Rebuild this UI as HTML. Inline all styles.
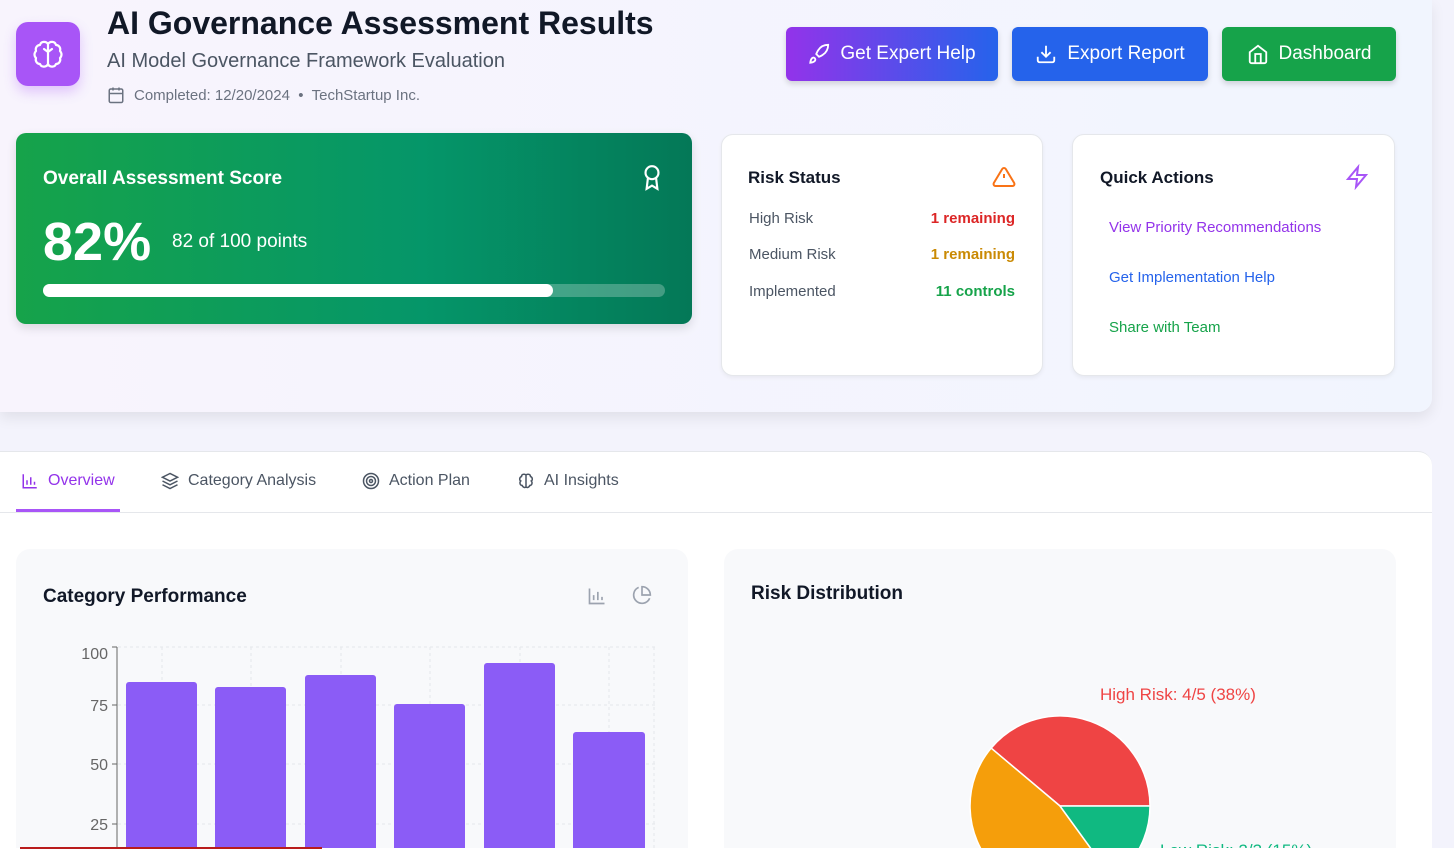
<!DOCTYPE html>
<html><head><meta charset="utf-8"><style>
*{box-sizing:border-box;margin:0;padding:0}
html,body{width:1454px;height:866px;overflow:hidden}
body{background:#f3f3fc;font-family:"Liberation Sans",sans-serif;position:relative;color:#111827}
.hdr{position:absolute;left:0;top:0;width:1432px;height:412px;background:linear-gradient(90deg,#f8f4fd,#f1f5fe);border-bottom-right-radius:14px;box-shadow:0 6px 14px rgba(0,0,0,.08)}
.logo{position:absolute;left:16px;top:22px;width:64px;height:64px;border-radius:12px;background:#a855f7;box-shadow:0 6px 12px rgba(168,85,247,.3)}
.abs{position:absolute}
.btn{position:absolute;top:27px;height:54px;border-radius:6px;color:#fff;font-size:19px;display:flex;align-items:center;justify-content:center;gap:10px;box-shadow:0 3px 6px rgba(0,0,0,.15)}
.card{position:absolute;background:#fff;border:1px solid #e5e7eb;border-radius:12px;box-shadow:0 2px 4px rgba(0,0,0,.05)}
.row{position:absolute;left:27px;right:27px;display:flex;justify-content:space-between;font-size:15px;color:#4b5563}
.tabs{position:absolute;left:0;top:451px;width:1432px;height:400px;background:#fff;border-top:1px solid #e5e7eb;border-top-right-radius:14px}
.tab{position:absolute;top:470px;font-size:16px;color:#4b5563;display:flex;align-items:center;gap:9px}
.panel{position:absolute;top:549px;height:300px;background:#f8f9fb;border-radius:14px 14px 0 0}
</style></head><body>
<div class="hdr"></div>
<div class="logo"><svg width="64" height="64" viewBox="0 0 64 64" fill="none" stroke="#fff" stroke-width="2.2" stroke-linecap="round" stroke-linejoin="round"><path d="M32 22v20M32 22c-2-3-7-3-8 1-3 0-5 3-4 6-2 2-2 5 0 7-1 3 1 6 4 6 1 3 6 4 8 0M32 22c2-3 7-3 8 1 3 0 5 3 4 6 2 2 2 5 0 7 1 3-1 6-4 6-1 3-6 4-8 0M32 30l-4-3M32 30l4-3"/></svg></div>
<div class="abs" style="left:107px;top:5px;font-size:32px;font-weight:bold;color:#111827">AI Governance Assessment Results</div>
<div class="abs" style="left:107px;top:50px;font-size:20px;color:#4b5563">AI Model Governance Framework Evaluation</div>
<div class="abs" style="left:107px;top:86px;font-size:15px;color:#6b7280;display:flex;align-items:center;gap:9px"><svg width="18" height="18" viewBox="0 0 24 24" fill="none" stroke="#6b7280" stroke-width="2"><rect x="3" y="4" width="18" height="18" rx="2"/><path d="M16 2v4M8 2v4M3 10h18"/></svg>Completed: 12/20/2024 &nbsp;•&nbsp; TechStartup Inc.</div>

<div class="btn" style="left:786px;width:212px;background:linear-gradient(90deg,#9333ea,#2563eb)"><svg width="22" height="22" viewBox="0 0 24 24" fill="none" stroke="#fff" stroke-width="2"><path d="M4.5 16.5c-1.5 1.3-2 5-2 5s3.7-.5 5-2c.7-.8.7-2.1-.1-2.9a2.2 2.2 0 0 0-2.9-.1zM12 15l-3-3a22 22 0 0 1 2-4A13 13 0 0 1 22 2c0 2.7-.8 7.5-6 11a22 22 0 0 1-4 2z"/></svg>Get Expert Help</div>
<div class="btn" style="left:1012px;width:196px;background:#2563eb"><svg width="22" height="22" viewBox="0 0 24 24" fill="none" stroke="#fff" stroke-width="2"><path d="M21 15v4a2 2 0 0 1-2 2H5a2 2 0 0 1-2-2v-4M7 10l5 5 5-5M12 15V3"/></svg>Export Report</div>
<div class="btn" style="left:1222px;width:174px;background:#16a34a"><svg width="22" height="22" viewBox="0 0 24 24" fill="none" stroke="#fff" stroke-width="2"><path d="M3 10l9-7 9 7v10a2 2 0 0 1-2 2H5a2 2 0 0 1-2-2z"/><path d="M9 22V12h6v10"/></svg>Dashboard</div>

<div class="abs" style="left:16px;top:133px;width:676px;height:191px;border-radius:10px;background:linear-gradient(90deg,#16a34a,#059669 60%,#047857);box-shadow:0 4px 10px rgba(0,0,0,.12)"></div>
<div class="abs" style="left:43px;top:168px;font-size:19px;font-weight:bold;color:#fff">Overall Assessment Score</div>
<svg class="abs" style="left:639px;top:163px" width="26" height="28" viewBox="0 0 24 26" fill="none" stroke="#fff" stroke-width="2"><circle cx="12" cy="9" r="6"/><path d="M8.2 14L7 24l5-3 5 3-1.2-10"/></svg>
<div class="abs" style="left:43px;top:212px;font-size:54px;font-weight:bold;color:#fff;line-height:60px">82%</div>
<div class="abs" style="left:172px;top:231px;font-size:19px;color:#fff">82 of 100 points</div>
<div class="abs" style="left:43px;top:284px;width:622px;height:13px;border-radius:7px;background:rgba(255,255,255,.25)"></div>
<div class="abs" style="left:43px;top:284px;width:510px;height:13px;border-radius:7px;background:#fff"></div>

<div class="card" style="left:721px;top:134px;width:322px;height:242px">
<div class="abs" style="left:26px;top:33px;font-size:17px;font-weight:bold">Risk Status</div>
<svg class="abs" style="left:270px;top:30px" width="24" height="24" viewBox="0 0 24 24" fill="none" stroke="#f97316" stroke-width="2"><path d="M10.3 3.9L1.8 18a2 2 0 0 0 1.7 3h17a2 2 0 0 0 1.7-3L13.7 3.9a2 2 0 0 0-3.4 0zM12 9v4M12 17h.01"/></svg>
<div class="row" style="top:75px"><span>High Risk</span><span style="color:#dc2626;font-weight:bold">1 remaining</span></div>
<div class="row" style="top:111px"><span>Medium Risk</span><span style="color:#ca8a04;font-weight:bold">1 remaining</span></div>
<div class="row" style="top:148px"><span>Implemented</span><span style="color:#16a34a;font-weight:bold">11 controls</span></div>
</div>
<div class="card" style="left:1072px;top:134px;width:323px;height:242px">
<div class="abs" style="left:27px;top:33px;font-size:17px;font-weight:bold">Quick Actions</div>
<svg class="abs" style="left:272px;top:29px" width="24" height="26" viewBox="0 0 24 24" fill="none" stroke="#a855f7" stroke-width="2"><path d="M13 2L3 14h9l-1 8 10-12h-9z"/></svg>
<div class="abs" style="left:36px;top:84px;font-size:15px;color:#9333ea">View Priority Recommendations</div>
<div class="abs" style="left:36px;top:134px;font-size:15px;color:#2563eb">Get Implementation Help</div>
<div class="abs" style="left:36px;top:184px;font-size:15px;color:#16a34a">Share with Team</div>
</div>

<div class="tabs"></div>
<div class="abs" style="left:0;top:512px;width:1432px;height:1px;background:#e5e7eb"></div>
<div class="abs" style="left:16px;top:509px;width:104px;height:3px;background:#a855f7"></div>
<div class="tab" style="left:21px;color:#9333ea;top:472px"><svg width="18" height="18" viewBox="0 0 24 24" fill="none" stroke="#9333ea" stroke-width="2"><path d="M3 3v18h18M8 17v-6M13 17V7M18 17v-4"/></svg>Overview</div>
<div class="tab" style="left:161px;top:472px"><svg width="18" height="18" viewBox="0 0 24 24" fill="none" stroke="#4b5563" stroke-width="2"><path d="M12 2L2 7l10 5 10-5zM2 12l10 5 10-5M2 17l10 5 10-5"/></svg>Category Analysis</div>
<div class="tab" style="left:362px;top:472px"><svg width="18" height="18" viewBox="0 0 24 24" fill="none" stroke="#4b5563" stroke-width="2"><circle cx="12" cy="12" r="10"/><circle cx="12" cy="12" r="6"/><circle cx="12" cy="12" r="2"/></svg>Action Plan</div>
<div class="tab" style="left:517px;top:472px"><svg width="18" height="18" viewBox="0 0 24 24" fill="none" stroke="#4b5563" stroke-width="2"><path d="M12 4v16M12 4c-2-2-6-1-6 2-3 1-3 5-1 6-2 2-1 6 2 6 1 3 4 3 5 2M12 4c2-2 6-1 6 2 3 1 3 5 1 6 2 2 1 6-2 6-1 3-4 3-5 2"/></svg>AI Insights</div>

<div class="panel" style="left:16px;width:672px"></div>
<div class="panel" style="left:724px;width:672px"></div>
<div class="abs" style="left:43px;top:586px;font-size:19px;font-weight:bold">Category Performance</div>
<svg class="abs" style="left:587px;top:586px" width="20" height="20" viewBox="0 0 24 24" fill="none" stroke="#9ca3af" stroke-width="2"><path d="M3 3v18h18M8 17v-6M13 17V7M18 17v-4"/></svg>
<svg class="abs" style="left:632px;top:585px" width="20" height="20" viewBox="0 0 24 24" fill="none" stroke="#9ca3af" stroke-width="2"><path d="M21.2 15.9A10 10 0 1 1 8 2.8"/><path d="M22 12A10 10 0 0 0 12 2v10z"/></svg>
<div class="abs" style="left:751px;top:583px;font-size:19px;font-weight:bold">Risk Distribution</div>

<svg class="abs" style="left:0;top:630px" width="700" height="218">
<g stroke="#e5e7eb" stroke-dasharray="3 3"><line x1="118" y1="17" x2="655" y2="17"/><line x1="118" y1="75" x2="655" y2="75"/><line x1="118" y1="134" x2="655" y2="134"/><line x1="118" y1="194" x2="655" y2="194"/><line x1="162" y1="17" x2="162" y2="220"/><line x1="251" y1="17" x2="251" y2="220"/><line x1="341" y1="17" x2="341" y2="220"/><line x1="430" y1="17" x2="430" y2="220"/><line x1="520" y1="17" x2="520" y2="220"/><line x1="609" y1="17" x2="609" y2="220"/><line x1="654" y1="17" x2="654" y2="220"/></g>
<g stroke="#666"><line x1="117" y1="17" x2="117" y2="220"/><line x1="112" y1="17" x2="117" y2="17"/><line x1="112" y1="75" x2="117" y2="75"/><line x1="112" y1="134" x2="117" y2="134"/><line x1="112" y1="194" x2="117" y2="194"/></g>
<g font-size="16" fill="#666" text-anchor="end" font-family="Liberation Sans"><text x="108" y="29">100</text><text x="108" y="81">75</text><text x="108" y="140">50</text><text x="108" y="200">25</text></g>
<g fill="#8b5cf6"><rect x="126" y="52" width="71" height="200" rx="3"/><rect x="215" y="57" width="71" height="200" rx="3"/><rect x="305" y="45" width="71" height="200" rx="3"/><rect x="394" y="74" width="71" height="200" rx="3"/><rect x="484" y="33" width="71" height="200" rx="3"/><rect x="573" y="102" width="72" height="200" rx="3"/></g>
</svg>

<svg class="abs" style="left:900px;top:660px" width="554" height="188">
<text x="200" y="40" font-size="17" fill="#ef4444" font-family="Liberation Sans">High Risk: 4/5 (38%)</text>
<path d="M160 146 L250 146 A90 90 0 0 0 91.1 88.1 Z" fill="#ef4444" stroke="#fff" stroke-width="1.5"/>
<path d="M160 146 L91.1 88.1 A90 90 0 0 0 212.9 218.8 Z" fill="#f59e0b" stroke="#fff" stroke-width="1.5"/>
<path d="M160 146 L212.9 218.8 A90 90 0 0 0 250 146 Z" fill="#10b981" stroke="#fff" stroke-width="1.5"/>
<text x="260" y="196" font-size="17" fill="#10b981" font-family="Liberation Sans">Low Risk: 2/3 (15%)</text>
</svg>
<div class="abs" style="left:0;top:848px;width:1454px;height:18px;background:#fff"></div>
<div class="abs" style="left:20px;top:847px;width:302px;height:2px;background:#b91c1c"></div>
</body></html>
